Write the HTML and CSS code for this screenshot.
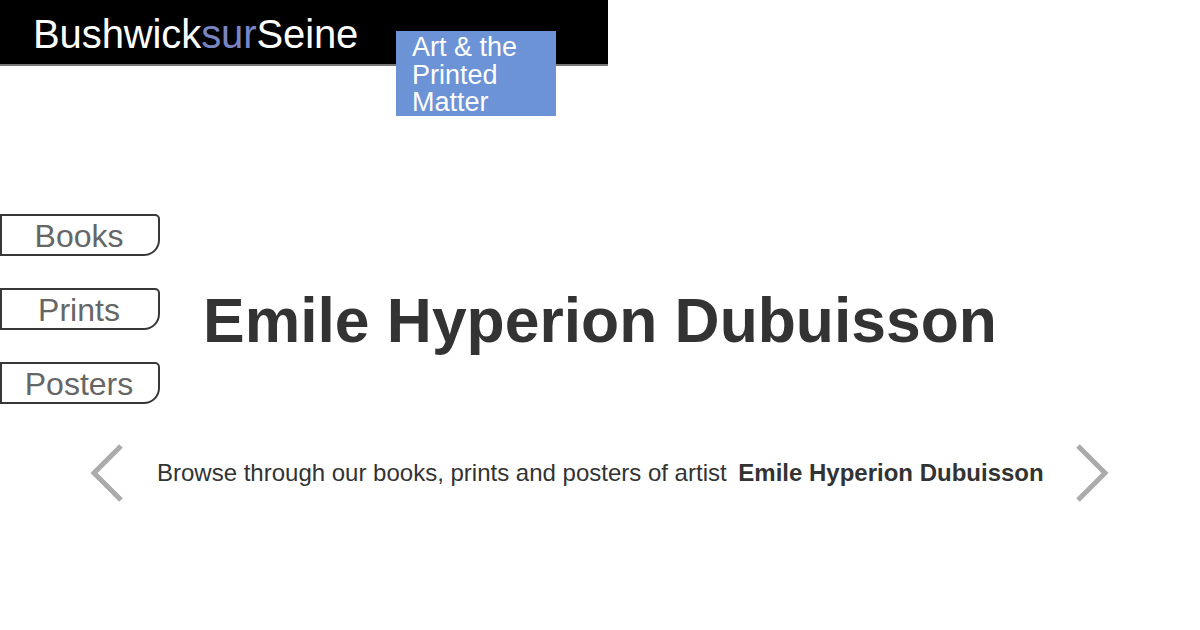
FILE: index.html
```html
<!DOCTYPE html>
<html>
<head>
<meta charset="utf-8">
<link rel="stylesheet" href="styles.css">
</head>
<body>
<header class="topbar">
  <div class="logo">Bushwick<span class="sur">sur</span>Seine</div>
  <div class="tagline">Art &amp; the<br>Printed<br>Matter</div>
</header>
<main class="main">
  <nav class="cats">
    <a class="cat">Books</a>
    <a class="cat">Prints</a>
    <a class="cat">Posters</a>
  </nav>
  <h1 class="artist">Emile Hyperion Dubuisson</h1>
</main>
<section class="browse">
  <svg class="chev" width="36" height="58" viewBox="0 0 36 58"><polyline points="31,2 4,29 31,56" fill="none" stroke="#ababab" stroke-width="5"/></svg>
  <p class="browse-text">Browse through our books, prints and posters of artist <b>Emile Hyperion Dubuisson</b></p>
  <svg class="chev" width="36" height="58" viewBox="0 0 36 58"><polyline points="5,2 32,29 5,56" fill="none" stroke="#ababab" stroke-width="5"/></svg>
</section>
</body>
</html>
```
FILE: styles.css
```css
html, body {
  margin: 0;
  padding: 0;
  background: #fff;
  font-family: "Liberation Sans", Arial, sans-serif;
}
.topbar {
  width: 608px;
  height: 64px;
  background: #000;
  border-bottom: 2px solid #777;
  display: flex;
  align-items: flex-start;
}
.logo {
  color: #fff;
  font-size: 40px;
  line-height: 1;
  padding-left: 33px;
  padding-top: 14px;
  width: 363px;
  letter-spacing: -0.1px;
}
.sur { color: #7a86c4; }
.tagline {
  margin-top: 31px;
  width: 144px;
  height: 82px;
  padding: 3px 0 0 16px;
  background: #6b93d6;
  color: #fff;
  font-size: 27px;
  line-height: 27.5px;
  position: relative;
  z-index: 1;
}
.main {
  display: grid;
  grid-template-columns: 160px 1fr 160px;
  margin-top: 148px;
}
.cats {
  display: flex;
  flex-direction: column;
  gap: 32px;
}
.cat {
  display: block;
  height: 42px;
  box-sizing: border-box;
  border: 2px solid #383838;
  border-radius: 0 5px 16px 0;
  color: #666;
  font-size: 32px;
  line-height: 40px;
  text-align: center;
  padding-right: 2px;
}
.artist {
  margin: 71px 0 0;
  text-align: center;
  font-size: 62.4px;
  font-weight: bold;
  color: #333;
  line-height: 71px;
  height: 71px;
}
.browse {
  display: flex;
  align-items: center;
  margin-top: 40px;
  padding-left: 90px;
}
.chev { display: block; flex: none; }
.browse-text {
  margin: 0 29px 0 31px;
  font-size: 24px;
  color: #333;
  white-space: nowrap;
}
.browse-text b { margin-left: 5px; }
```
